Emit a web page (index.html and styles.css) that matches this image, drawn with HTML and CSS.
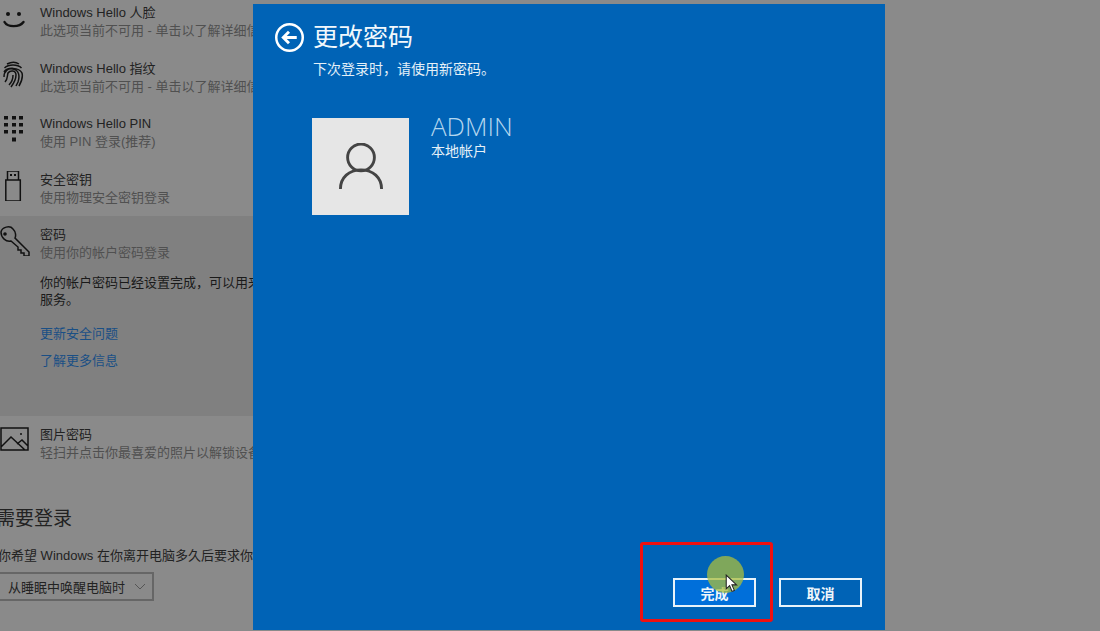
FILE: index.html
```html
<!DOCTYPE html>
<html lang="zh-CN">
<head>
<meta charset="utf-8">
<title>更改密码</title>
<link rel="stylesheet" href="styles.css">
</head>
<body>
<div class="screen">
  <aside class="settings">
    <div class="row">
      <svg class="icon" viewBox="0 0 30 30"><circle cx="8" cy="10" r="2" class="fill"/><circle cx="19" cy="10" r="2" class="fill"/><path d="M4.500 18c3 5.500 15 5.500 19 0" class="line"/></svg>
      <div class="text"><div class="title">Windows Hello 人脸</div><div class="sub">此选项当前不可用 - 单击以了解详细信息</div></div>
    </div>
    <div class="row">
      <svg class="icon" viewBox="0 0 30 30"><path class="thin" d="M7 4c4-2 9-2 12 0M4.500 8c4-4 13-4 17 0M4 12c3-5 15-5 18 1c1 4 0 8-3 13M4 17c0-6 4-9 9-8c6 1 7 7 5 13l-2 4M5 22c3-3 2-6 3-9c2-3 8-3 8 2c0 4-2 8-5 12M9 25c3-3 4-6 4-10"/></svg>
      <div class="text"><div class="title">Windows Hello 指纹</div><div class="sub">此选项当前不可用 - 单击以了解详细信息</div></div>
    </div>
    <div class="row">
      <svg class="icon" viewBox="0 0 30 30"><path class="fill" d="M4 1h4v3.500H4zM12 1h4v3.500h-4zM19 1h4v3.500h-4zM4 8h4v3.500H4zM12 8h4v3.500h-4zM19 8h4v3.500h-4zM4 15h4v3.500H4zM12 15h4v3.500h-4zM19 15h4v3.500h-4zM12 22.500h4v4h-4z"/></svg>
      <div class="text"><div class="title">Windows Hello PIN</div><div class="sub">使用 PIN 登录(推荐)</div></div>
    </div>
    <div class="row">
      <svg class="icon" viewBox="0 0 30 30"><path class="thin" d="M7.500 0h11v9h-11zM5.800 9h14.500v21H5.800z"/><path class="fill" d="M10 3h2v2h-2zM14 3h2v2h-2z"/></svg>
      <div class="text"><div class="title">安全密钥</div><div class="sub">使用物理安全密钥登录</div></div>
    </div>
    <section class="selected">
      <div class="row row-open">
        <svg class="icon" viewBox="0 0 30 30"><path class="thin" d="M1 6c1-5 9-7 12-3c3 3 3 7 2 9l14 14v4h-5v-3h-3v-3h-3v-3l-7-6c-5 1-10-3-10-9z"/><circle cx="5" cy="8" r="1.800" class="fill"/></svg>
        <div class="text"><div class="title">密码</div><div class="sub">使用你的帐户密码登录</div></div>
      </div>
      <div class="detail">
        <p class="desc">你的帐户密码已经设置完成，可以用来登录 Windows、应用和<br>服务。</p>
        <a class="link">更新安全问题</a>
        <a class="link">了解更多信息</a>
      </div>
    </section>
    <div class="row row-picture">
      <svg class="icon" viewBox="0 0 30 30"><path class="thin" d="M1 2h27v22H1zM1 21l10-10l14 13M17 18l5-4l6 6"/><circle cx="21" cy="8" r="1" class="fill"/></svg>
      <div class="text"><div class="title">图片密码</div><div class="sub">轻扫并点击你最喜爱的照片以解锁设备</div></div>
    </div>
    <h2 class="heading">需要登录</h2>
    <p class="ask">你希望 Windows 在你离开电脑多久后要求你重新登录？</p>
    <div class="combo">
      <span>从睡眠中唤醒电脑时</span>
      <svg class="chev" viewBox="0 0 12 7"><path d="M1 1l5 5l5-5"/></svg>
    </div>
  </aside>

  <main class="dialog">
    <header class="dialog-head">
      <svg class="back" viewBox="0 0 28 28"><circle cx="14" cy="14" r="12.800"/><path d="M21 14H8M13.500 8.500L8 14l5.500 5.500"/></svg>
      <h1>更改密码</h1>
    </header>
    <p class="hint">下次登录时，请使用新密码。</p>
    <div class="account">
      <div class="avatar">
        <svg viewBox="0 0 46 50"><circle cx="23" cy="15" r="14"/><path d="M1.500 48c0-12 9-20 21.500-20s21.500 8 21.500 20"/></svg>
      </div>
      <div>
        <div class="name">ADMIN</div>
        <div class="kind">本地帐户</div>
      </div>
    </div>
    <footer class="actions">
      <button class="btn btn-primary">完成</button>
      <button class="btn">取消</button>
      <div class="mark"></div>
      <div class="halo"></div>
      <svg class="cursor" viewBox="0 0 12 18"><path d="M1 1v13l3.200-3l2.300 5.500l2.200-1l-2.300-5.200h4.400z"/></svg>
    </footer>
  </main>
</div>
</body>
</html>
```
FILE: styles.css
```css
* { box-sizing: border-box; }
html, body { margin: 0; height: 100%; overflow: hidden; }
body {
  background: #8a8a8a;
  font-family: "Liberation Sans", "Noto Sans CJK SC", sans-serif;
}
.screen { display: flex; width: 1100px; height: 631px; }

.settings { width: 253px; flex: none; overflow: hidden; padding-top: 4px; color: #1a1a1a; }
.row { display: flex; height: 55.5px; }
.icon { width: 30px; height: 30px; flex: none; margin-right: 10px; }
.text { white-space: nowrap; font-size: 13px; line-height: 18px; }
.title { color: #222; }
.sub { color: #505050; }
.fill { fill: #111; stroke: none; }
.line { fill: none; stroke: #111; stroke-width: 2.400; stroke-linecap: round; }
.thin { fill: none; stroke: #111; stroke-width: 1.500; }

.selected { background: #808080; height: 200px; margin-top: -10px; padding-top: 10px; }
.row-open { height: 48px; }
.detail { padding-left: 40px; font-size: 13px; }
.desc { margin: 0 0 17px; line-height: 17px; color: #1a1a1a; white-space: nowrap; }
.link { display: block; color: #1a4f85; line-height: 18px; margin-bottom: 9px; }

.row-picture { margin-top: 10px; height: 62px; }
.heading { margin: 18px 0 0 -4px; font-weight: 400; font-size: 19px; line-height: 26px; color: #222; white-space: nowrap; }
.ask { margin: 14px 0 0 -2px; font-size: 13px; line-height: 20px; color: #222; white-space: nowrap; }
.combo {
  display: flex; align-items: center; justify-content: space-between;
  width: 156px; height: 29px; margin: 6px 0 0 -2px; padding: 0 6px 0 8px;
  border: 2px solid #666; font-size: 13px; color: #222;
}
.chev { width: 12px; height: 7px; fill: none; stroke: #555; stroke-width: 1; }

.dialog {
  width: 632px; height: 626px; margin-top: 4px; flex: none;
  background: #0063b6; color: #fff;
  display: flex; flex-direction: column; padding: 0 0 0 22px;
}
.dialog-head { display: flex; align-items: center; gap: 9px; padding-top: 18px; }
.back { width: 29px; height: 29px; fill: none; stroke: #fff; stroke-width: 2.400; }
.back path { stroke-width: 2.800; }
.dialog-head h1 { margin: 0; font-weight: 400; font-size: 25px; line-height: 30px; color: #f2f8fc; }
.hint { margin: 7px 0 0 38px; font-size: 14px; line-height: 20px; color: #e4f0f8; }
.account { display: flex; gap: 22px; margin: 39px 0 0 37px; }
.avatar {
  width: 97px; height: 97px; background: #e6e6e6;
  display: flex; align-items: center; justify-content: center;
}
.avatar svg { width: 44px; height: 48px; fill: none; stroke: #444; stroke-width: 3; }
.name { font-size: 26px; line-height: 28px; color: #b4d6ee; font-weight: 300; margin-top: -6px; font-family: "Open Sans", "Liberation Sans", sans-serif; }
.kind { font-size: 14px; line-height: 18px; color: #e4f0f8; margin-top: 2px; }

.actions { position: relative; margin-top: auto; display: flex; gap: 23px; padding: 0 0 23px 398px; }
.btn {
  width: 83px; height: 29px; padding: 0; background: transparent;
  border: 2px solid #e8f3fa; color: #eef6fb;
  font: 700 14px "Liberation Sans", "Noto Sans CJK SC", sans-serif;
}
.btn-primary { background: #006fda; }
.mark {
  position: absolute; left: 365px; top: -36px; width: 133px; height: 80px;
  border: 3px solid #f01010; border-radius: 3px;
}
.halo {
  position: absolute; left: 432px; top: -22px; width: 37px; height: 37px;
  border-radius: 50%; background: rgba(170, 190, 60, .75);
}
.cursor {
  position: absolute; left: 450px; top: -4px; width: 13px; height: 19px;
  fill: #fff; stroke: #222; stroke-width: 1;
}
```
